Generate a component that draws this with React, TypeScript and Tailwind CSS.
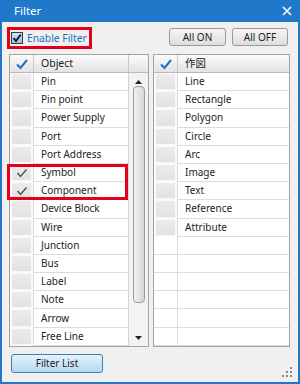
import React from "react";

const leftItems = ["Pin","Pin point","Power Supply","Port","Port Address","Symbol","Component","Device Block","Wire","Junction","Bus","Label","Note","Arrow","Free Line"];
const rightItems = ["Line","Rectangle","Polygon","Circle","Arc","Image","Text","Reference","Attribute"];
const checked = new Set(["Symbol","Component"]);

function BlueCheck() {
  return (
    <svg width="14" height="12" viewBox="0 0 14 12">
      <path d="M2 6.5 L5.5 10 L12 2" fill="none" stroke="#1f6fd0" strokeWidth="2" />
    </svg>
  );
}

function GrayCheck() {
  return (
    <svg width="12" height="10" viewBox="0 0 12 10">
      <path d="M1.5 5 L4.5 8.5 L10.5 1.5" fill="none" stroke="#505050" strokeWidth="1.4" />
    </svg>
  );
}

function Header({ label, scroll }: { label: string; scroll?: boolean }) {
  return (
    <div className="flex h-[18px] border-b border-[#b9b9b9] bg-gradient-to-b from-[#fbfbfb] to-[#e3e3e3] shrink-0">
      <div className="w-[24px] flex items-center justify-center border-r border-[#c9c9c9]">
        <BlueCheck />
      </div>
      <div className="flex-1 flex items-center pl-[7px] text-[10.5px] text-[#222] font-['Noto_Sans','Noto_Sans_CJK_JP',sans-serif]">{label}</div>
      {scroll && <div className="w-[20px] border-l border-[#c9c9c9]" />}
    </div>
  );
}

function Row({ label, empty }: { label?: string; empty?: boolean }) {
  const isChecked = label ? checked.has(label) : false;
  return (
    <div className="flex h-[18.2px] shrink-0">
      {empty ? (
        <div className="w-[24px] bg-white border-r border-b border-[#dcdcdc]" />
      ) : (
        <div className="w-[24px] bg-[#fafafa] border-r border-[#dcdcdc] p-[1px] pl-[2px] pr-[2px]">
          <div className="w-full h-full bg-gradient-to-b from-[#ececec] to-[#e2e2e2] border-b border-[#f8f8f8] flex items-center justify-center">
            {isChecked && <GrayCheck />}
          </div>
        </div>
      )}
      <div className="flex-1 bg-white border-b border-[#dcdcdc] flex items-center pl-[7px] text-[10px] text-[#222] whitespace-nowrap">
        {label}
      </div>
    </div>
  );
}

export default function App() {
  return (
    <div className="w-[300px] h-[384px] flex flex-col bg-[#1f78c9] font-['Noto_Sans',sans-serif] overflow-hidden relative">
      <div className="h-[22px] shrink-0 flex items-center justify-between pl-[14px] pr-[8px] text-white text-[11.5px]">
        <span className="leading-none">Filter</span>
        <svg width="10" height="10" viewBox="0 0 10 10">
          <path d="M1 1 L9 9 M9 1 L1 9" stroke="white" strokeWidth="1.6" />
        </svg>
      </div>
      <div className="flex-1 mx-[2px] mb-[2px] bg-[#f0f0f0] flex flex-col relative">
        <div className="h-[32px] shrink-0 flex items-start justify-between pl-[5px] pr-[10px] pt-[5px]">
          <div className="w-[85px] h-[22px] border-[3px] border-[#e2001a] flex items-center">
            <div className="ml-[1px] w-[12px] h-[12px] border border-[#3a3a3a] bg-gradient-to-b from-[#cfe6f8] to-[#8cc2ec] flex items-center justify-center">
              <svg width="10" height="10" viewBox="0 0 10 10">
                <path d="M1.5 5 L4 8 L8.8 1.5" fill="none" stroke="#111" strokeWidth="1.8" />
              </svg>
            </div>
            <span className="ml-[4px] text-[10.3px] text-[#1f6ec2] leading-none whitespace-nowrap">Enable Filter</span>
          </div>
          <div className="flex gap-[6px] pt-[1px]">
            <div className="w-[57px] h-[18px] rounded-[3px] border border-[#9a9a9a] bg-gradient-to-b from-[#f6f6f6] to-[#dedede] flex items-center justify-center text-[10px] text-[#222]">All ON</div>
            <div className="w-[56px] h-[18px] rounded-[3px] border border-[#9a9a9a] bg-gradient-to-b from-[#f6f6f6] to-[#dedede] flex items-center justify-center text-[10px] text-[#222]">All OFF</div>
          </div>
        </div>
        <div className="h-[293px] shrink-0 flex gap-[4px] pl-[7px]">
          <div className="w-[140px] h-full border border-[#a3a3a3] flex flex-col bg-white">
            <Header label="Object" scroll />
            <div className="flex-1 flex min-h-0">
              <div className="flex-1 flex flex-col">
                {leftItems.map((l) => <Row key={l} label={l} />)}
              </div>
              <div className="w-[20px] bg-[#f3f3f3] border-l border-[#d4d4d4] flex flex-col items-center relative">
                <div className="h-[12px] flex items-end justify-center pb-[1px]">
                  <svg width="7" height="4" viewBox="0 0 7 4"><path d="M0 4 L3.5 0 L7 4 Z" fill="#222" /></svg>
                </div>
                <div className="mt-[1px] w-[12px] h-[217px] rounded-[4px] border border-[#9b9b9b] bg-gradient-to-r from-[#f2f2f2] to-[#d6d6d6]" />
                <div className="flex-1" />
                <div className="h-[12px] flex items-start justify-center pt-[2px]">
                  <svg width="7" height="4" viewBox="0 0 7 4"><path d="M0 0 L7 0 L3.5 4 Z" fill="#222" /></svg>
                </div>
              </div>
            </div>
          </div>
          <div className="w-[137px] h-full border border-[#a3a3a3] flex flex-col bg-white">
            <Header label="作図" />
            <div className="flex-1 flex flex-col overflow-hidden">
              {rightItems.map((l) => <Row key={l} label={l} />)}
              {Array.from({ length: 6 }).map((_, i) => <Row key={"e" + i} empty />)}
            </div>
          </div>
        </div>
        <div className="flex-1 pt-[7px] pl-[9px]">
          <div className="w-[92px] h-[19px] rounded-[3px] border border-[#3c7fb1] bg-gradient-to-b from-[#e5f3fc] to-[#b4daf3] flex items-center justify-center text-[10px] text-[#222]">Filter List</div>
        </div>
        <svg className="absolute right-[5px] bottom-[4px]" width="11" height="11" viewBox="0 0 11 11">
          <rect x="8" y="0" width="2" height="2" fill="#8a8a8a" />
          <rect x="4" y="4" width="2" height="2" fill="#8a8a8a" />
          <rect x="8" y="4" width="2" height="2" fill="#8a8a8a" />
          <rect x="0" y="8" width="2" height="2" fill="#8a8a8a" />
          <rect x="4" y="8" width="2" height="2" fill="#8a8a8a" />
          <rect x="8" y="8" width="2" height="2" fill="#8a8a8a" />
        </svg>
      </div>
      <div className="absolute left-[7px] top-[164px] w-[121px] h-[36px] border-[3px] border-[#e2001a] pointer-events-none" />
    </div>
  );
}
